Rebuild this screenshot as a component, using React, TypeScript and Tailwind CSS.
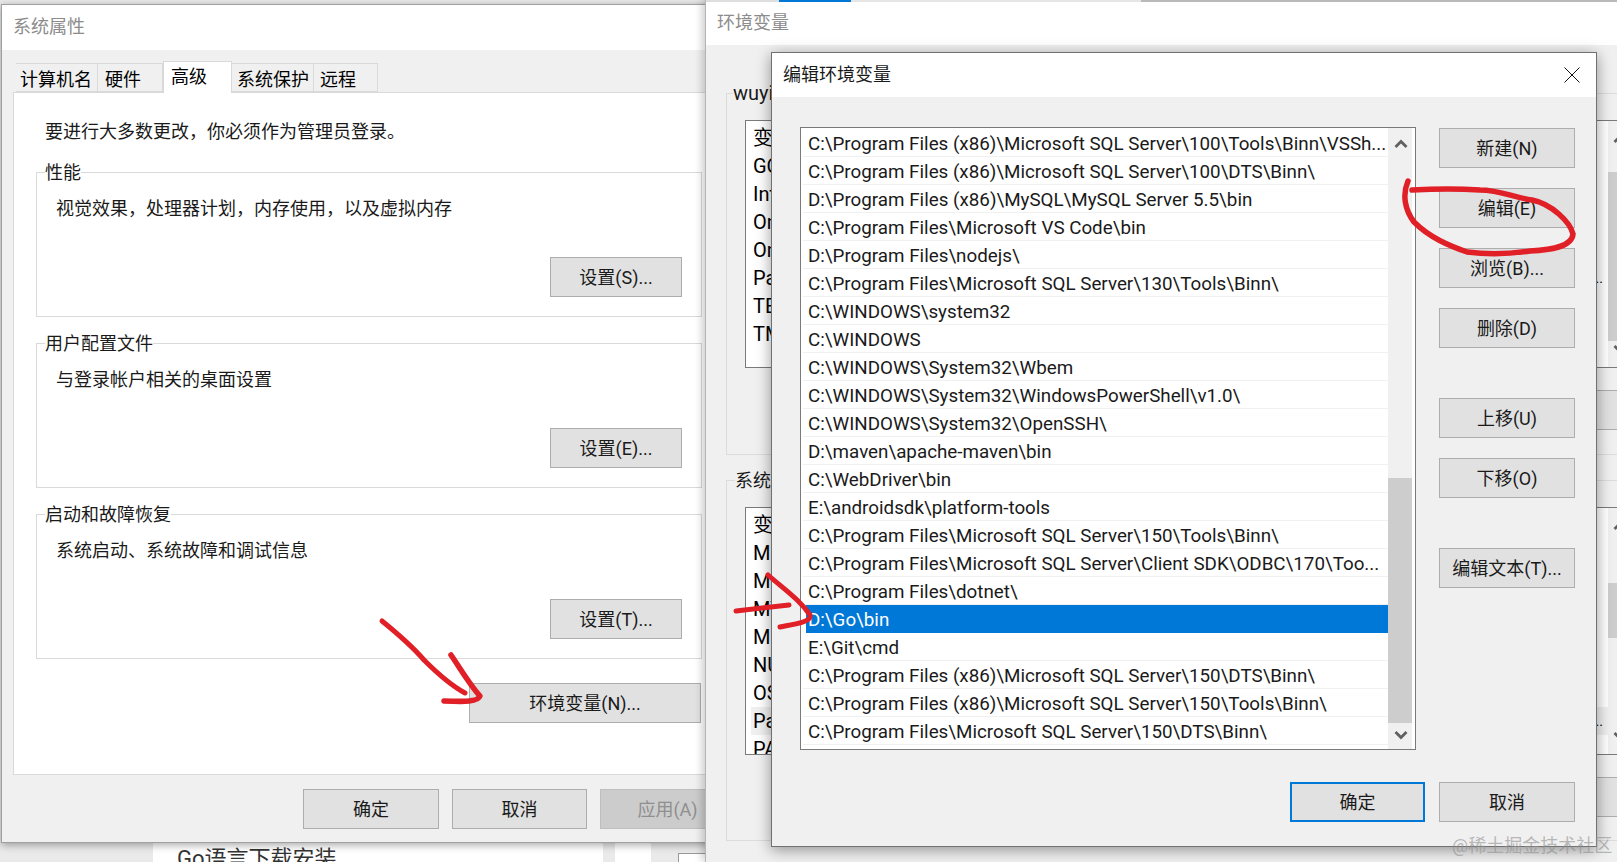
const pathRows = [
    "C:\\Program Files (x86)\\Microsoft SQL Server\\100\\Tools\\Binn\\VSSh...",
    "C:\\Program Files (x86)\\Microsoft SQL Server\\100\\DTS\\Binn\\",
    "D:\\Program Files (x86)\\MySQL\\MySQL Server 5.5\\bin",
    "C:\\Program Files\\Microsoft VS Code\\bin",
    "D:\\Program Files\\nodejs\\",
    "C:\\Program Files\\Microsoft SQL Server\\130\\Tools\\Binn\\",
    "C:\\WINDOWS\\system32",
    "C:\\WINDOWS",
    "C:\\WINDOWS\\System32\\Wbem",
    "C:\\WINDOWS\\System32\\WindowsPowerShell\\v1.0\\",
    "C:\\WINDOWS\\System32\\OpenSSH\\",
    "D:\\maven\\apache-maven\\bin",
    "C:\\WebDriver\\bin",
    "E:\\androidsdk\\platform-tools",
    "C:\\Program Files\\Microsoft SQL Server\\150\\Tools\\Binn\\",
    "C:\\Program Files\\Microsoft SQL Server\\Client SDK\\ODBC\\170\\Too...",
    "C:\\Program Files\\dotnet\\",
    "D:\\Go\\bin",
    "E:\\Git\\cmd",
    "C:\\Program Files (x86)\\Microsoft SQL Server\\150\\DTS\\Binn\\",
    "C:\\Program Files (x86)\\Microsoft SQL Server\\150\\Tools\\Binn\\",
    "C:\\Program Files\\Microsoft SQL Server\\150\\DTS\\Binn\\",
];

const userVars = ["变量", "GOPATH", "IntelliJ IDEA", "OneDrive", "OneDriveConsumer", "Path", "TEMP", "TMP"];
const systemVars = ["变量", "MAVEN_HOME", "MSSQL", "MYSQL", "MOZ", "NUMBER_OF_PROCESSORS", "OS", "Path", "PATHEXT"];

const Chevron = ({ down = false }: { down?: boolean }) => (
    <svg width="16" height="11" viewBox="0 0 16 11" fill="none" className={down ? "rotate-180" : ""}>
        <path d="M2.5 9 L8 3.5 L13.5 9" stroke="#606060" strokeWidth="2.8" />
    </svg>
);

const buttonTones = {
    normal: "border border-[#adadad] bg-[#e1e1e1] text-[#1a1a1a]",
    focused: "border-2 border-[#0078d7] bg-[#e1e1e1] text-[#1a1a1a]",
    disabled: "border border-[#bfbfbf] bg-[#cccccc] text-[#8f8f8f]",
};

const Button = ({
    label,
    tone = "normal",
    className = "",
}: {
    label: string;
    tone?: "normal" | "focused" | "disabled";
    className?: string;
}) => (
    <div className={`flex h-[40px] items-center justify-center text-[18px] ${buttonTones[tone]} ${className}`}>{label}</div>
);

const Tab = ({ label, active = false, className = "" }: { label: string; active?: boolean; className?: string }) => (
    <div
        className={
            active
                ? `relative z-10 -mb-px -mt-[2px] flex h-[32px] items-start border border-b-0 border-[#d9d9d9] bg-white pt-[1px] text-[18px] ${className}`
                : `flex h-[29px] items-center border border-l-0 border-[#d9d9d9] pt-[3px] text-[18px] ${className}`
        }
    >
        {label}
    </div>
);

const Group = ({ label, text, button }: { label: string; text: string; button: string }) => (
    <div className="relative flex h-[145px] w-[666px] flex-col justify-between border border-[#d9d9d9] pb-[19px] pl-[19px] pr-[19px] pt-[24px]">
        <div className="absolute -top-[12px] left-[8px] bg-white text-[18px] leading-[24px]">{label}</div>
        <div className="text-[18px] leading-[24px]">{text}</div>
        <Button label={button} className="w-[132px] self-end" />
    </div>
);

const VarList = ({
    rows,
    highlight,
    thumbTop,
    thumbHeight,
}: {
    rows: string[];
    highlight?: string;
    thumbTop: number;
    thumbHeight: number;
}) => (
    <div className="flex h-[248px] w-[880px] overflow-hidden border border-[#7a7a7a] bg-white">
        <div className="w-[862px] shrink-0 pt-[3px]">
            {rows.map((row, i) => (
                <div
                    key={i}
                    className={`ml-[5px] flex h-[28px] items-center justify-between pl-[2px] pr-[5px] text-[20px] ${row === highlight ? "bg-[#f0f0f0]" : ""}`}
                >
                    <span>{row}</span>
                    {row === "Path" && <span className="text-[14px]">...</span>}
                </div>
            ))}
        </div>
        <div className="relative flex w-[24px] shrink-0 flex-col items-center justify-between bg-[#f0f0f0] py-[12px]">
            <div className="absolute left-0 right-0 bg-[#cdcdcd]" style={{ top: thumbTop, height: thumbHeight }} />
            <Chevron />
            <Chevron down />
        </div>
    </div>
);

const LeftWindow = () => (
    <div className="absolute left-[1px] top-[4px] flex h-[839px] w-[760px] flex-col border border-[#a0a0a0] bg-[#f0f0f0] shadow-[0_2px_8px_rgba(0,0,0,0.35)]">
        <div className="flex h-[45px] items-center bg-white pb-[2px] pl-[11px] text-[18px] text-[#8c8c8c]">系统属性</div>
        <div className="mt-[13px] flex h-[29px] pl-[14px]">
            <Tab label="计算机名" className="w-[82px] border-l pl-[4px]" />
            <Tab label="硬件" className="w-[65px] pl-[7px]" />
            <Tab label="高级" active className="w-[69px] pl-[7px]" />
            <Tab label="系统保护" className="w-[82px] pl-[5px]" />
            <Tab label="远程" className="w-[64px] pl-[6px]" />
        </div>
        <div className="ml-[11px] h-[683px] w-[730px] border border-[#d9d9d9] bg-white pl-[22px] pt-[27px] text-[#1a1a1a]">
            <div className="ml-[9px] text-[18px] leading-[24px]">要进行大多数更改，你必须作为管理员登录。</div>
            <div className="mt-[28px] flex flex-col gap-[26px]">
                <Group label="性能" text="视觉效果，处理器计划，内存使用，以及虚拟内存" button="设置(S)..." />
                <Group label="用户配置文件" text="与登录帐户相关的桌面设置" button="设置(E)..." />
                <Group label="启动和故障恢复" text="系统启动、系统故障和调试信息" button="设置(T)..." />
            </div>
            <Button label="环境变量(N)..." className="ml-[433px] mt-[24px] w-[232px]" />
        </div>
        <div className="ml-[301px] mt-[14px] flex gap-[13px]">
            <Button label="确定" className="w-[136px]" />
            <Button label="取消" className="w-[135px]" />
            <Button label="应用(A)" tone="disabled" className="w-[135px]" />
        </div>
    </div>
);

const EnvWindow = () => (
    <div className="absolute left-[705px] top-0 flex h-[862px] w-[950px] flex-col border-l border-[#b4b4b4] bg-[#f0f0f0] shadow-[-3px_0_8px_rgba(0,0,0,0.2)]">
        <div className="flex h-[2px] bg-[#b9b9b9]">
            <div className="w-[73px] bg-[#dedede]" />
            <div className="w-[72px] bg-[#0078d7]" />
            <div className="w-[290px] bg-[#e6e6e6]" />
        </div>
        <div className="flex h-[43px] items-center bg-white pb-[2px] pl-[11px] text-[18px] text-[#8c8c8c]">环境变量</div>
        <div className="relative ml-[20px] mt-[48px] h-[362px] w-[920px] border border-[#dcdcdc] pl-[18px] pt-[26px]">
            <div className="absolute -top-[14px] left-[6px] bg-[#f0f0f0] text-[20px] leading-[26px] text-[#1a1a1a]">wuyi</div>
            <VarList rows={userVars} thumbTop={51} thumbHeight={169} />
            <Button label="编辑" className="ml-[680px] mt-[22px] w-[200px]" />
        </div>
        <div className="relative ml-[20px] mt-[25px] h-[361px] w-[920px] border border-[#dcdcdc] pl-[18px] pt-[26px]">
            <div className="absolute -top-[12px] left-[8px] bg-[#f0f0f0] text-[18px] leading-[24px] text-[#1a1a1a]">系统变量</div>
            <VarList rows={systemVars} highlight="Path" thumbTop={75} thumbHeight={55} />
            <Button label="编辑" className="ml-[680px] mt-[22px] w-[200px]" />
        </div>
    </div>
);

const EditDialog = () => (
    <div className="absolute left-[771px] top-[52px] flex h-[795px] w-[826px] flex-col border border-[#707070] bg-[#f0f0f0] text-[#1a1a1a] shadow-[0_3px_14px_rgba(0,0,0,0.4)]">
        <div className="flex h-[44px] items-center justify-between bg-white pb-[1px] pl-[11px] pr-[16px] text-[18px]">
            <span>编辑环境变量</span>
            <svg width="16" height="16" viewBox="0 0 16 16" fill="none">
                <path d="M0.5 0.5 L15.5 15.5 M15.5 0.5 L0.5 15.5" stroke="#111" strokeWidth="1" />
            </svg>
        </div>
        <div className="ml-[28px] mt-[30px] flex gap-[23px]">
            <div className="flex h-[623px] w-[616px] border border-[#7a7a7a] bg-white">
                <div className="w-[587px] shrink-0 pl-[2px] pt-[1px]">
                    {pathRows.map((row, i) =>
                        row === "D:\\Go\\bin" ? (
                            <div key={i} className="ml-[3px] flex h-[28px] items-center whitespace-nowrap bg-[#0078d7] pl-[2px] pt-[2px] text-[18.8px] text-white">
                                {row}
                            </div>
                        ) : (
                            <div key={i} className="flex h-[28px] items-center whitespace-nowrap border-b border-[#f0f0f0] pl-[5px] pt-[3px] text-[18.8px]">
                                {row}
                            </div>
                        ),
                    )}
                </div>
                <div className="relative flex w-[24px] shrink-0 flex-col items-center justify-between bg-[#f0f0f0] pb-[8px] pt-[10px]">
                    <div className="absolute left-0 right-0 top-[350px] h-[245px] bg-[#cdcdcd]" />
                    <div className="relative ml-[1px] flex">
                        <Chevron />
                    </div>
                    <div className="relative ml-[1px] flex">
                        <Chevron down />
                    </div>
                </div>
            </div>
            <div className="flex w-[136px] flex-col pt-px">
                <Button label="新建(N)" />
                <Button label="编辑(E)" className="mt-[20px]" />
                <Button label="浏览(B)..." className="mt-[20px]" />
                <Button label="删除(D)" className="mt-[20px]" />
                <Button label="上移(U)" className="mt-[50px]" />
                <Button label="下移(O)" className="mt-[20px]" />
                <Button label="编辑文本(T)..." className="mt-[50px]" />
            </div>
        </div>
        <div className="mt-[32px] flex justify-end gap-[14px] pr-[21px]">
            <Button label="确定" tone="focused" className="w-[135px]" />
            <Button label="取消" className="w-[136px]" />
        </div>
    </div>
);

// hand drawn red marks on top of the screenshot
const RedMarks = () => (
    <svg className="absolute inset-0" width="1617" height="862" fill="none" stroke="#e01f26" strokeLinecap="round" strokeLinejoin="round">
        <path d="M382 621 C398 634 412 646 424 660 C438 674 452 686 465 693" strokeWidth="5" />
        <path d="M451 655 C460 668 470 685 480 696 C478 702 465 702 444 701" strokeWidth="5.5" />
        <path d="M736 611 C755 609 772 607 789 605" strokeWidth="5" />
        <path d="M768 575 C785 590 800 600 810 615 C812 622 795 624 780 627" strokeWidth="5" />
        <path
            d="M1408 181 C1402 195 1405 210 1414 222 C1430 238 1450 246 1467 252 C1490 255 1510 254 1530 251 C1550 250 1572 247 1573 234 C1570 222 1552 204 1532 200 C1515 198 1500 190 1480 190 C1450 188 1430 189 1412 190"
            strokeWidth="5.5"
        />
    </svg>
);

export default function App() {
    return (
        <div className="relative h-[862px] w-[1617px] overflow-hidden bg-[#eaeaea] font-['Roboto','Noto_Sans_CJK_SC',sans-serif]">
            <div className="flex h-full">
                <div className="ml-[153px] mt-[843px] h-[19px] w-[450px] overflow-hidden bg-white pl-[24px] text-[22px] leading-[32px] text-[#333]">
                    Go语言下载安装
                </div>
                <div className="ml-[12px] mt-[843px] h-[19px] w-[36px] bg-white" />
                <div className="ml-[27px] mt-[853px] h-[20px] w-[40px] border border-[#999] bg-white" />
            </div>
            <LeftWindow />
            <EnvWindow />
            <EditDialog />
            <RedMarks />
            <div className="absolute left-[1452px] top-[834px] text-[18px] leading-[24px] text-[#8f8f8f]/60">@稀土掘金技术社区</div>
        </div>
    );
}
